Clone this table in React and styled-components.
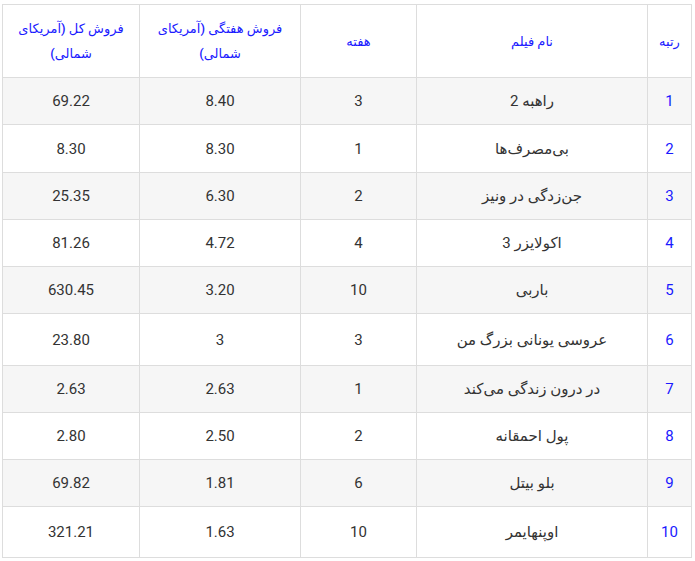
import React from 'react';
import styled, { createGlobalStyle } from 'styled-components';

const GlobalStyle = createGlobalStyle`
  body {
    margin: 0;
    background: #ffffff;
    font-family: Roboto, "DejaVu Sans", sans-serif;
  }
`;

const Wrapper = styled.div`
  padding: 4px 3px 0 3px;
  direction: rtl;
`;

const Table = styled.table`
  width: 689px;
  border-collapse: collapse;
  table-layout: fixed;
  border: 1px solid #dddddd;
`;

const HeadCell = styled.th`
  box-sizing: border-box;
  width: ${(p) => p.w}px;
  border: 1px solid #dddddd;
  padding: 11px 10px;
  color: #1a1aff;
  font-size: 13px;
  font-weight: 500;
  line-height: 25px;
  text-align: center;
  vertical-align: middle;
`;

const Row = styled.tr`
  background: ${(p) => (p.striped ? '#f6f6f6' : '#ffffff')};
  height: ${(p) => p.h}px;
`;

const Cell = styled.td`
  box-sizing: border-box;
  border: 1px solid #dddddd;
  padding: 0 10px;
  color: ${(p) => (p.rank ? '#1a1aff' : '#333333')};
  font-size: 15px;
  line-height: 24px;
  text-align: center;
  vertical-align: middle;
`;

const columns = [
  { title: 'رتبه', w: 44 },
  { title: 'نام فیلم', w: 231 },
  { title: 'هفته', w: 116 },
  { title: 'فروش هفتگی (آمریکای شمالی)', w: 161 },
  { title: 'فروش کل (آمریکای شمالی)', w: 137 },
];

// rank, title, weeks, weekly, total, row height
const films = [
  ['1', 'راهبه 2', '3', '8.40', '69.22', 47],
  ['2', 'بی‌مصرف‌ها', '1', '8.30', '8.30', 48],
  ['3', 'جن‌زدگی در ونیز', '2', '6.30', '25.35', 47],
  ['4', 'اکولایزر 3', '4', '4.72', '81.26', 47],
  ['5', 'باربی', '10', '3.20', '630.45', 47],
  ['6', 'عروسی یونانی بزرگ من', '3', '3', '23.80', 52],
  ['7', 'در درون زندگی می‌کند', '1', '2.63', '2.63', 47],
  ['8', 'پول احمقانه', '2', '2.50', '2.80', 47],
  ['9', 'بلو بیتل', '6', '1.81', '69.82', 47],
  ['10', 'اوپنهایمر', '10', '1.63', '321.21', 51],
];

export default function App() {
  return (
    <>
      <GlobalStyle />
      <Wrapper>
        <Table>
          <thead>
            <tr>
              {columns.map((c) => (
                <HeadCell key={c.title} w={c.w}>{c.title}</HeadCell>
              ))}
            </tr>
          </thead>
          <tbody>
            {films.map((f, i) => (
              <Row key={f[0]} striped={i % 2 === 0} h={f[5]}>
                {f.slice(0, 5).map((v, j) => (
                  <Cell key={j} rank={j === 0}>{v}</Cell>
                ))}
              </Row>
            ))}
          </tbody>
        </Table>
      </Wrapper>
    </>
  );
}
